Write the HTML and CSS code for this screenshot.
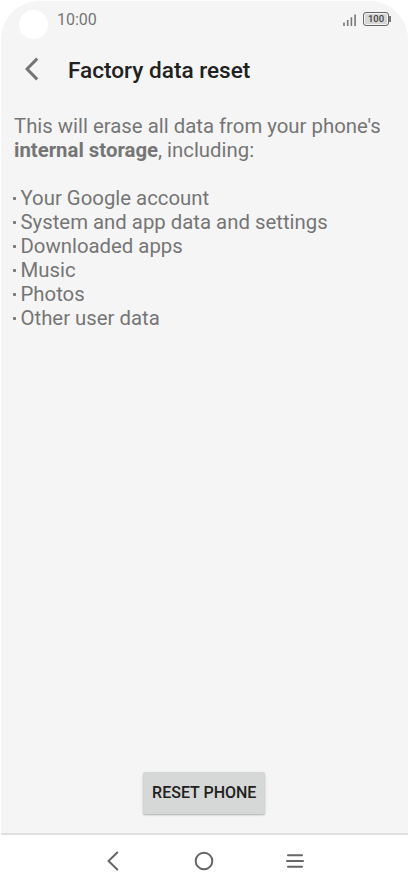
FILE: index.html
```html
<!DOCTYPE html>
<html lang="en">
<head>
  <meta charset="UTF-8">
  <meta name="viewport" content="width=device-width, initial-scale=1">
  <title>Factory data reset</title>
  <link rel="stylesheet" href="styles.css">
</head>
<body>

  <div class="phone">
    <div class="status-bar">
      <span class="camera"></span>
      <span class="time">10:00</span>
      <svg class="signal" width="14" height="12" viewBox="0 0 14 12">
        <path d="M1 8.5V12M4.7 6V12M8.4 3.2V12M12.1 0.5V12" />
      </svg>
      <span class="battery">100</span>
    </div>

    <header class="title-bar">
      <svg class="back" width="14" height="24" viewBox="0 0 14 24">
        <path d="M12.2 1.6L2 12L12.2 22.4" />
      </svg>
      <h1>Factory data reset</h1>
    </header>

    <main class="content">
      <p>This will erase all data from your phone's <b>internal storage</b>, including:</p>
      <ul>
        <li>Your Google account</li>
        <li>System and app data and settings</li>
        <li>Downloaded apps</li>
        <li>Music</li>
        <li>Photos</li>
        <li>Other user data</li>
      </ul>
    </main>

    <button class="reset-btn">RESET PHONE</button>

    <nav class="nav-bar">
      <svg width="20" height="20" viewBox="0 0 20 20">
        <path d="M14.3 1.5L5.5 10L14.3 18.5" />
      </svg>
      <svg width="20" height="20" viewBox="0 0 20 20">
        <circle cx="10" cy="10" r="8.3" />
      </svg>
      <svg width="20" height="20" viewBox="0 0 20 20">
        <path d="M3 4.2H17M2 10H18M3 15.7H17" />
      </svg>
    </nav>
  </div>

</body>
</html>
```

FILE: styles.css
```css
* {
  box-sizing: border-box;
}

body {
  margin: 0;
  background: #fff;
  font-family: Roboto, sans-serif;
  color: #757575;
}

.phone {
  display: flex;
  flex-direction: column;
  width: 407px;
  height: 886px;
  margin: 1px;
  border-radius: 38px;
  background: #f5f5f5;
  overflow: hidden;
}

.status-bar {
  display: flex;
  align-items: center;
  height: 36px;
  padding: 0 18px;
}

.camera {
  width: 29px;
  height: 29px;
  margin-top: 10px;
  border-radius: 50%;
  background: #fff;
}

.time {
  margin-left: 9px;
  font-size: 16px;
}

.signal {
  margin-left: auto;
  margin-top: 1px;
  fill: none;
  stroke: #777;
  stroke-width: 1.6;
}

.battery {
  position: relative;
  width: 26px;
  height: 14px;
  margin-left: 6px;
  margin-right: 1px;
  border: 1px solid #666;
  border-radius: 3px;
  background: #d6d6d6;
  box-shadow: inset 0 0 0 1px #f5f5f5;
  color: #444;
  font-size: 9.5px;
  font-weight: 500;
  line-height: 12px;
  text-align: center;
}

.battery::after {
  content: "";
  position: absolute;
  top: 3px;
  right: -3px;
  width: 2px;
  height: 6px;
  background: #777;
}

.title-bar {
  display: flex;
  align-items: center;
  height: 64px;
  padding-left: 24px;
}

.back {
  fill: none;
  stroke: #757575;
  stroke-width: 3;
}

.title-bar h1 {
  margin: 2px 0 0 29px;
  color: #212121;
  font-size: 22.6px;
  font-weight: 500;
}

.content {
  flex: 1;
  padding: 13px 12px 0;
  font-size: 20.35px;
  line-height: 24px;
}

.content p {
  margin: 0 0 24px 1px;
}

.content ul {
  margin: 0;
  padding: 0;
  list-style: none;
}

.content li {
  display: flex;
  align-items: center;
}

.content li::before {
  content: "";
  width: 3px;
  height: 3px;
  margin-right: 4.5px;
  border-radius: 1px;
  background: #757575;
}

.reset-btn {
  align-self: center;
  width: 122px;
  height: 42px;
  margin: 0 0.5px 19px 0;
  padding: 0 0 1px;
  border: none;
  border-radius: 2px;
  background: #d6d8d7;
  box-shadow: 0 1px 2px rgba(0, 0, 0, 0.3);
  color: #212121;
  font-family: inherit;
  font-size: 16px;
  font-weight: 500;
}

.nav-bar {
  display: flex;
  justify-content: center;
  gap: 71px;
  height: 54px;
  padding: 16px 0.5px 0 0;
  border-top: 2px solid #e0e0e0;
  background: #fff;
}

.nav-bar svg {
  fill: none;
  stroke: #666;
  stroke-width: 2;
  stroke-linecap: round;
  stroke-linejoin: round;
}
```
